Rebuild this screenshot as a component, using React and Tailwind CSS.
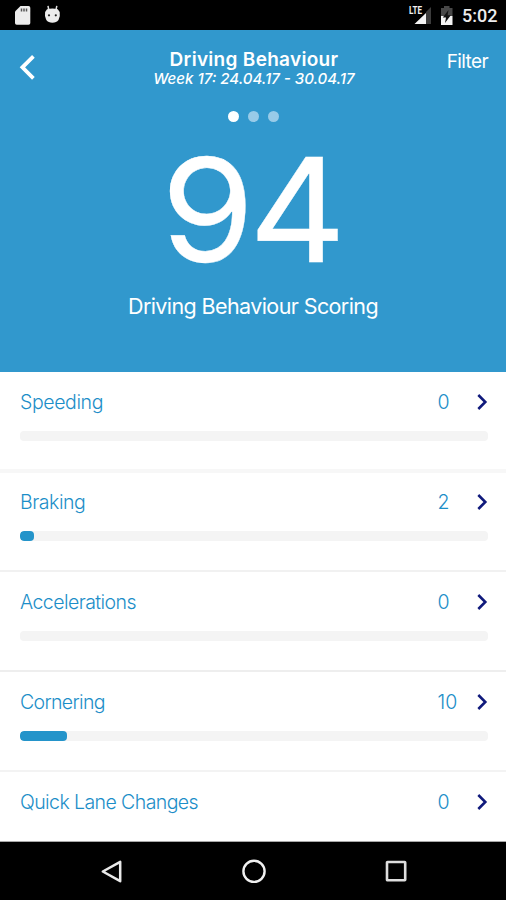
const rows = [
  { label: "Speeding", value: 0, width: 0, tracking: "tracking-[-0.4px]", pad: "pt-[16px]", divider: "h-1 bg-[#f7f7f7]", height: "h-[101px]" },
  { label: "Braking", value: 2, width: 14, tracking: "tracking-[-0.45px]", pad: "pt-[15px]", divider: "h-0.5 bg-[#f1f1f1]", height: "h-[99px]" },
  { label: "Accelerations", value: 0, width: 0, tracking: "tracking-[-0.55px]", pad: "pt-[16px]", divider: "h-0.5 bg-[#eeeeee]", height: "h-[100px]" },
  { label: "Cornering", value: 10, width: 47, tracking: "tracking-[-0.65px]", pad: "pt-[16px]", divider: "h-0.5 bg-[#f3f3f3]", height: "h-[100px]" },
  { label: "Quick Lane Changes", value: 0, width: null, tracking: "tracking-[-0.58px]", pad: "pt-[16px]", divider: "h-px bg-[#a8a8a8]", height: "h-[70px]" },
];

function StatusBar() {
  return (
    <div className="flex h-[30px] items-start bg-black">
      <svg className="ml-[14px] mt-[5px]" width="17" height="20" viewBox="0 0 17 20">
        <path d="M6.5 1H14.5Q16.3 1 16.3 2.8V18Q16.3 19.8 14.5 19.8H2.7Q1 19.8 1 18V6.5Z" fill="#ececec" />
        <path d="M7.5 3.6v2.8M10 3.6v2.8M12.5 3.6v2.8" stroke="#555" strokeWidth="1.5" />
      </svg>
      <svg className="ml-[13px] mt-[5px]" width="17" height="19" viewBox="0 0 17 19">
        <path d="M4.8 5L4 0.8M12 5L12.8 0.8" stroke="#dedede" strokeWidth="1.5" />
        <path d="M3 4.2Q8.4 3 13.8 4.2L15.7 7Q16.5 11.5 14.5 15Q12.5 17.8 8.4 17.8Q4.3 17.8 2.3 15Q.3 11.5 1.1 7Z" fill="#ececec" />
        <circle cx="5" cy="10.3" r="1.1" fill="#222" />
        <circle cx="11.8" cy="10.3" r="1.1" fill="#222" />
      </svg>
      <div className="flex-1" />
      <svg className="mt-[5px]" width="24" height="21" viewBox="0 0 24 21">
        <path d="M23 2V19H18V7Z" fill="#3c3c3c" />
        <path d="M18 8V19H6.5Z" fill="#f4f4f4" />
        <text x="1" y="9.3" fill="#f0f0f0" fontFamily="Roboto, sans-serif" fontSize="11" fontWeight="700" textLength="13" lengthAdjust="spacingAndGlyphs">LTE</text>
      </svg>
      <svg className="ml-[8px] mt-[5px]" width="14" height="21" viewBox="0 0 14 21">
        <path d="M4 1H9.5V3H12.5V11H1V3H4Z" fill="#484848" />
        <path d="M1 11H12.5V20H1Z" fill="#f4f4f4" />
        <path d="M8.5 5L2.8 12.5H6L5 18L10.8 10.2H7.6Z" fill="#111" />
      </svg>
      <div className="ml-2 mr-[9px] mt-[5px] w-[35px] whitespace-nowrap font-['Roboto',sans-serif] text-[18px] font-medium leading-[22px] text-[#ededed]">5:02</div>
    </div>
  );
}

function Header() {
  return (
    <header className="flex h-[342px] flex-col items-center bg-[#3198cd] text-white">
      <div className="flex w-full items-start justify-between">
        <div className="w-[120px] pl-[19px] pt-[24px]">
          <svg width="18" height="28" viewBox="0 0 18 28">
            <path d="M14.4 2.3L3.4 13.3L14.4 24.3" fill="none" stroke="white" strokeWidth="3.8" />
          </svg>
        </div>
        <div className="flex flex-col items-center whitespace-nowrap pl-[2px] pt-[19px]">
          <h1 className="text-[19px] font-semibold leading-[21px] tracking-[0.3px]">Driving Behaviour</h1>
          <p className="text-[15px] font-medium italic leading-[18px]">Week 17: 24.04.17 - 30.04.17</p>
        </div>
        <div className="w-[120px] pr-[18px] pt-[20px] text-right text-[19px] leading-6 tracking-[-0.6px]">Filter</div>
      </div>
      <div className="mt-[23px] flex gap-[9px]">
        <i className="h-[11px] w-[11px] rounded-full bg-white" />
        <i className="h-[11px] w-[11px] rounded-full bg-[#98cbe8]" />
        <i className="h-[11px] w-[11px] rounded-full bg-[#98cbe8]" />
      </div>
      <div className="mt-[16px] origin-center scale-x-[1.045] whitespace-nowrap pr-[4px] text-[144px] leading-[144px] tracking-[-5px] [-webkit-text-stroke:0.3px_white]">94</div>
      <p className="mt-[10px] whitespace-nowrap text-[21.5px] leading-7 tracking-[-0.6px]">Driving Behaviour Scoring</p>
    </header>
  );
}

function Row({ row }) {
  return (
    <section className={`flex flex-col ${row.height}`}>
      <div className={`flex items-center pl-5 pr-[17.5px] text-[19.5px] font-light leading-7 text-[#1c8ec8] ${row.pad}`}>
        <span className={`flex-1 whitespace-nowrap ${row.tracking}`}>{row.label}</span>
        <span className="w-[38px]">{row.value}</span>
        <svg width="13" height="18" viewBox="0 0 13 18">
          <path d="M2.3 2L9.3 9L2.3 16" fill="none" stroke="#101a7c" strokeWidth="2.6" />
        </svg>
      </div>
      {row.width !== null && (
        <div className="ml-5 mr-[18px] mt-[15px] h-[10px] overflow-hidden rounded-[4px] bg-[#f4f4f4]">
          <div className="h-full rounded-[4px] bg-[#2494ca]" style={{ width: row.width }} />
        </div>
      )}
      <div className={`mt-auto shrink-0 ${row.divider}`} />
    </section>
  );
}

export default function App() {
  return (
    <div className="flex h-[900px] w-[506px] flex-col overflow-hidden bg-white font-['Inter','Liberation_Sans',sans-serif]">
      <StatusBar />
      <Header />
      <main>
        {rows.map((row) => (
          <Row key={row.label} row={row} />
        ))}
      </main>
      <nav className="flex flex-1 items-start bg-black pl-[99px] pt-[17px]">
        <svg width="26" height="26" viewBox="0 0 26 26">
          <path d="M21.2 2.8V22.2L3.8 12.5Z" fill="none" stroke="#e9e9e9" strokeWidth="2.5" strokeLinejoin="round" />
        </svg>
        <svg className="ml-[116px]" width="26" height="26" viewBox="0 0 26 26">
          <circle cx="13" cy="12.3" r="10.6" fill="none" stroke="#f0f0f0" strokeWidth="2.4" />
        </svg>
        <svg className="ml-[116px]" width="26" height="26" viewBox="0 0 26 26">
          <rect x="4" y="3" width="18.2" height="18.2" rx="0.5" fill="none" stroke="#dedede" strokeWidth="2.6" />
        </svg>
      </nav>
    </div>
  );
}
